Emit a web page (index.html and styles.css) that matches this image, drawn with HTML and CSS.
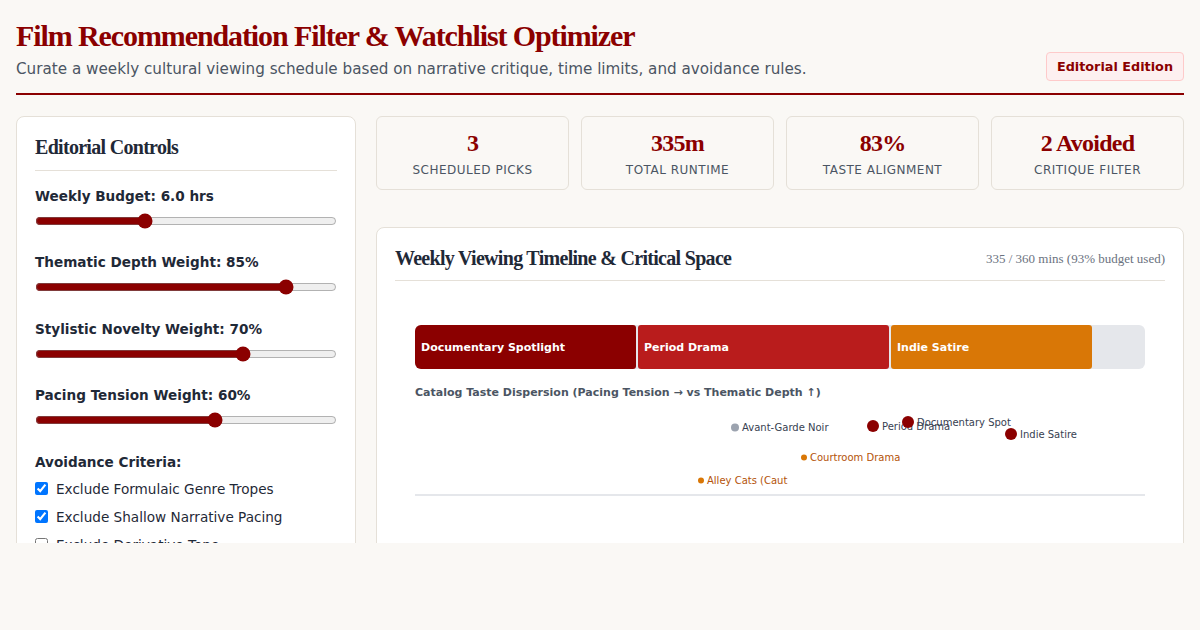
FILE: index.html
```html
<!DOCTYPE html>
<html lang="en">
<head>
<meta charset="utf-8">
<title>Film Recommendation Filter &amp; Watchlist Optimizer</title>
<link rel="stylesheet" href="styles.css">
</head>
<body>
<div class="app">
  <header class="header">
    <div class="header-text">
      <h1 class="title">Film Recommendation Filter &amp; Watchlist Optimizer</h1>
      <p class="subtitle">Curate a weekly cultural viewing schedule based on narrative critique, time limits, and avoidance rules.</p>
    </div>
    <span class="badge">Editorial Edition</span>
  </header>

  <main class="main">
    <aside class="panel controls">
      <h2 class="panel-title">Editorial Controls</h2>
      <div class="control">
        <label class="control-label">Weekly Budget: 6.0 hrs</label>
        <input class="slider" type="range" min="1" max="15" step="0.5" value="6">
      </div>
      <div class="control">
        <label class="control-label">Thematic Depth Weight: 85%</label>
        <input class="slider" type="range" min="0" max="100" value="85">
      </div>
      <div class="control">
        <label class="control-label">Stylistic Novelty Weight: 70%</label>
        <input class="slider" type="range" min="0" max="100" value="70">
      </div>
      <div class="control">
        <label class="control-label">Pacing Tension Weight: 60%</label>
        <input class="slider" type="range" min="0" max="100" value="60">
      </div>
      <div class="avoid">
        <div class="control-label">Avoidance Criteria:</div>
        <label class="check"><input type="checkbox" checked> Exclude Formulaic Genre Tropes</label>
        <label class="check"><input type="checkbox" checked> Exclude Shallow Narrative Pacing</label>
        <label class="check"><input type="checkbox"> Exclude Derivative Tone</label>
      </div>
    </aside>

    <section class="content">
      <div class="stats">
        <div class="stat"><div class="stat-value">3</div><div class="stat-label">Scheduled Picks</div></div>
        <div class="stat"><div class="stat-value">335m</div><div class="stat-label">Total Runtime</div></div>
        <div class="stat"><div class="stat-value">83%</div><div class="stat-label">Taste Alignment</div></div>
        <div class="stat"><div class="stat-value">2 Avoided</div><div class="stat-label">Critique Filter</div></div>
      </div>

      <div class="panel timeline">
        <div class="timeline-head">
          <h2 class="panel-title">Weekly Viewing Timeline &amp; Critical Space</h2>
          <span class="budget-note">335 / 360 mins (93% budget used)</span>
        </div>
        <div class="chart">
          <div class="bar">
            <div class="seg seg-doc" style="width:221px">Documentary Spotlight</div>
            <div class="seg seg-period" style="width:251px">Period Drama</div>
            <div class="seg seg-indie" style="width:201px">Indie Satire</div>
          </div>
          <div class="scatter-title">Catalog Taste Dispersion (Pacing Tension → vs Thematic Depth ↑)</div>
          <div class="scatter">
            <div class="pt pt-gray" style="left:316px;top:22px"><span class="dot dot-md"></span><span class="pt-label">Avant-Garde Noir</span></div>
            <div class="pt pt-red" style="left:452px;top:21px"><span class="dot dot-lg"></span><span class="pt-label">Period Drama</span></div>
            <div class="pt pt-red" style="left:487px;top:17px"><span class="dot dot-lg"></span><span class="pt-label">Documentary Spot</span></div>
            <div class="pt pt-red" style="left:590px;top:29px"><span class="dot dot-lg"></span><span class="pt-label">Indie Satire</span></div>
            <div class="pt pt-orange" style="left:386px;top:52px"><span class="dot dot-sm"></span><span class="pt-label">Courtroom Drama</span></div>
            <div class="pt pt-orange" style="left:283px;top:75px"><span class="dot dot-sm"></span><span class="pt-label">Alley Cats (Caut</span></div>
          </div>
        </div>
      </div>
    </section>
  </main>
</div>
</body>
</html>
```

FILE: styles.css
```css
* { box-sizing: border-box; }

body {
  margin: 0;
  background: #faf8f5;
  font-family: "DejaVu Sans", sans-serif;
  color: #1f2937;
}

.app {
  height: 543px;
  overflow: hidden;
  padding: 18px 16px 0;
}

.header {
  display: flex;
  justify-content: space-between;
  align-items: flex-end;
  padding-bottom: 12px;
  border-bottom: 2px solid #8b0000;
}

.title {
  margin: 0;
  font-family: "Liberation Serif", serif;
  font-size: 30px;
  font-weight: bold;
  color: #8b0000;
  letter-spacing: -1.1px;
  line-height: 1.2;
}

.subtitle {
  margin: 6px 0 3px;
  font-size: 15.2px;
  color: #4b5563;
}

.badge {
  background: #fdf0f0;
  border: 1px solid #fecaca;
  border-radius: 4px;
  color: #8b0000;
  font-size: 12.8px;
  font-weight: bold;
  padding: 6px 10px;
}

.main {
  display: grid;
  grid-template-columns: 340px 1fr;
  gap: 20px;
  margin-top: 21px;
  align-items: start;
}

.panel {
  background: #ffffff;
  border: 1px solid #e5e0d8;
  border-radius: 8px;
  padding: 19px 18px 18px;
}

.panel-title {
  margin: 0;
  font-family: "Liberation Serif", serif;
  font-size: 20px;
  font-weight: bold;
  letter-spacing: -0.7px;
  color: #1f2937;
}

.controls .panel-title {
  padding-bottom: 11px;
  border-bottom: 1px solid #e5e0d8;
  margin-bottom: 17px;
}

.control {
  margin-bottom: 25.4px;
}

.control-label {
  display: block;
  font-size: 13.6px;
  font-weight: bold;
  color: #1f2937;
}

.slider {
  display: block;
  width: 100%;
  margin: 9px 0 0;
  accent-color: #8b0000;
}

.avoid .control-label {
  margin-bottom: 11px;
}

.check {
  display: flex;
  align-items: center;
  gap: 8px;
  font-size: 13.6px;
  color: #1f2937;
  margin-bottom: 12px;
}

.check input {
  margin: 0;
  width: 13px;
  height: 13px;
}

.content {
  display: flex;
  flex-direction: column;
  gap: 37px;
}

.stats {
  display: grid;
  grid-template-columns: repeat(4, 1fr);
  gap: 12px;
}

.stat {
  background: #faf8f5;
  border: 1px solid #e5e0d8;
  border-radius: 6px;
  height: 74px;
  display: flex;
  flex-direction: column;
  align-items: center;
  justify-content: center;
}

.stat-value {
  font-family: "Liberation Serif", serif;
  font-size: 24px;
  font-weight: bold;
  letter-spacing: -0.75px;
  color: #8b0000;
  line-height: 1.2;
}

.stat-label {
  margin-top: 5px;
  font-size: 12px;
  letter-spacing: 0.5px;
  text-transform: uppercase;
  color: #4b5563;
}

.timeline {
  min-height: 400px;
}

.timeline-head {
  display: flex;
  justify-content: space-between;
  align-items: center;
  padding-bottom: 10px;
  border-bottom: 1px solid #e5e0d8;
}

.budget-note {
  font-family: "Liberation Serif", serif;
  font-size: 13px;
  color: #6b7280;
}

.chart {
  padding: 44px 20px 0;
}

.bar {
  display: flex;
  gap: 2px;
  height: 44px;
  background: #e5e7eb;
  border-radius: 6px;
  overflow: hidden;
}

.seg {
  display: flex;
  align-items: center;
  padding-left: 6px;
  color: #ffffff;
  font-size: 11px;
  font-weight: bold;
  white-space: nowrap;
  overflow: hidden;
  border-radius: 3px;
}

.seg-doc { background: #8b0000; }
.seg-period { background: #b91c1c; }
.seg-indie { background: #d97706; }

.scatter-title {
  margin-top: 17px;
  font-size: 11px;
  font-weight: bold;
  color: #4b5563;
}

.scatter {
  position: relative;
  height: 91px;
  margin-top: 6px;
  border-bottom: 2px solid #e5e7eb;
}

.pt {
  position: absolute;
  display: flex;
  align-items: center;
  gap: 3px;
  transform: translateY(-50%);
  font-size: 10px;
  white-space: nowrap;
}

.dot {
  display: block;
  border-radius: 50%;
  flex: none;
}

.dot-sm { width: 6px; height: 6px; }
.dot-md { width: 8px; height: 8px; }
.dot-lg { width: 12px; height: 12px; }

.pt-gray .dot { background: #9ca3af; }
.pt-gray .pt-label { color: #374151; }
.pt-red .dot { background: #8b0000; }
.pt-red .pt-label { color: #374151; }
.pt-orange .dot { background: #d97706; }
.pt-orange .pt-label { color: #b45309; }
```
